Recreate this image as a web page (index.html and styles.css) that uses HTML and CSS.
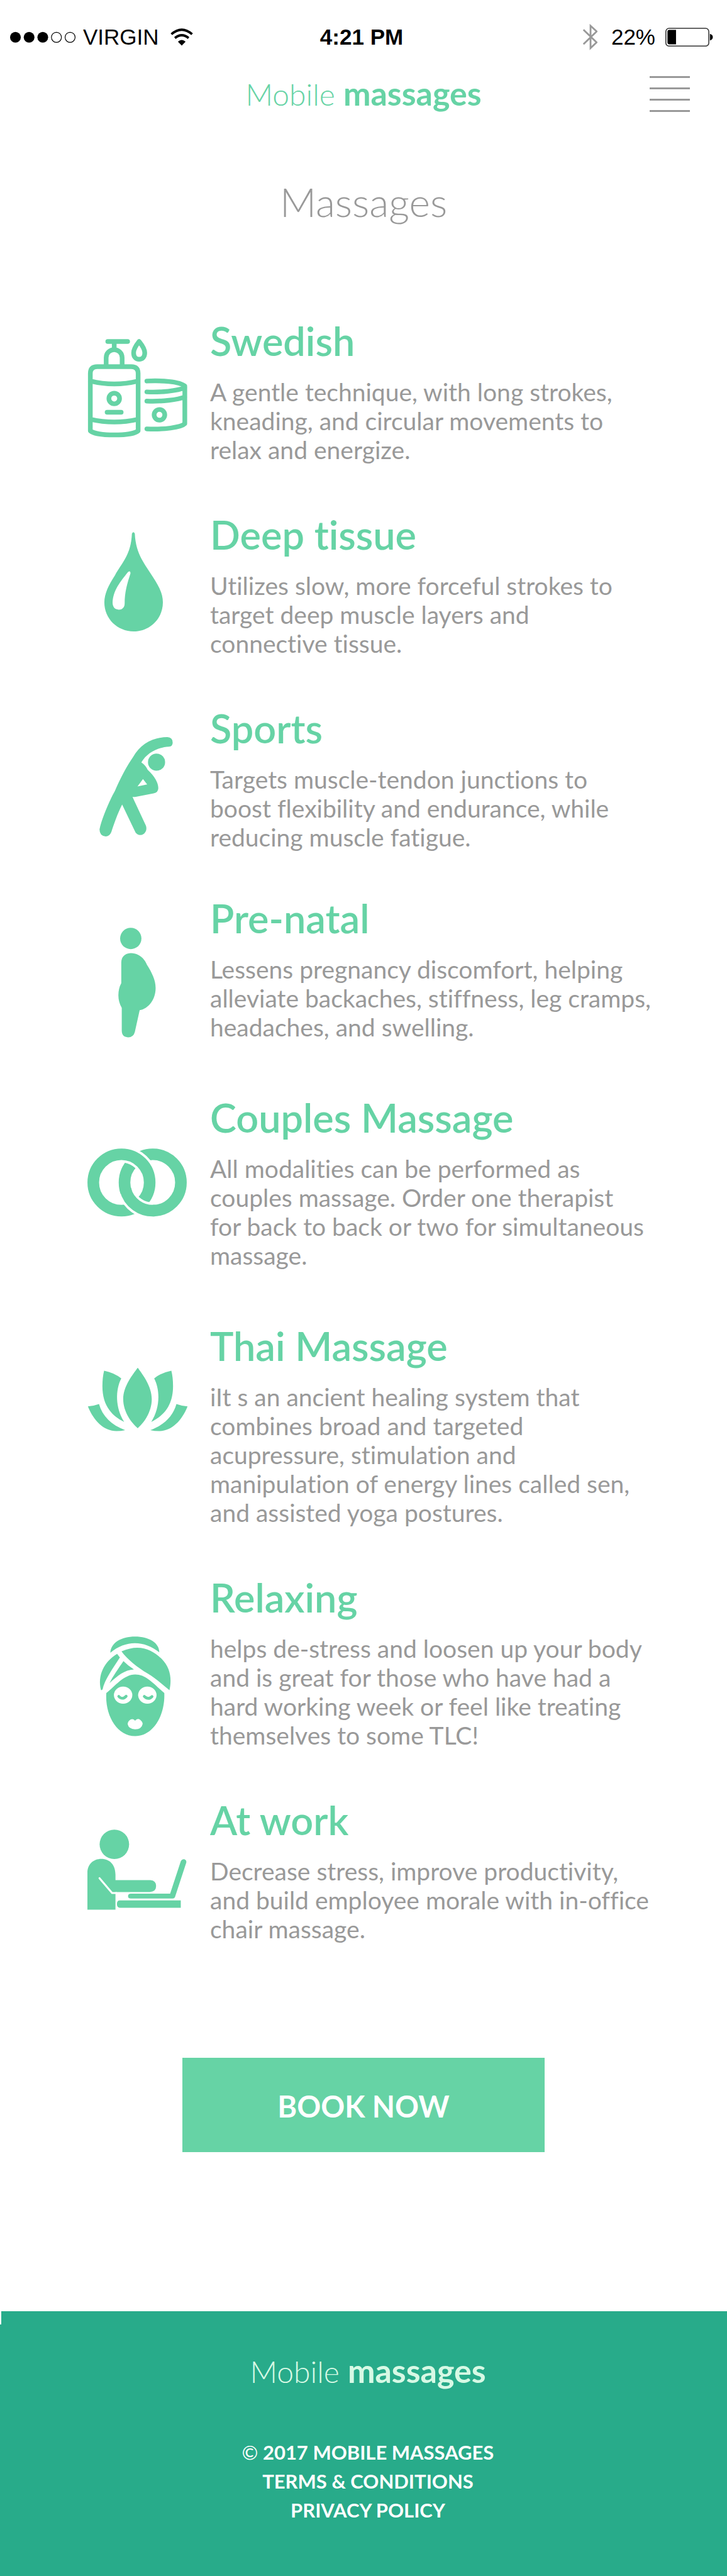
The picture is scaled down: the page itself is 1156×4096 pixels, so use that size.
FILE: index.html
```html
<!DOCTYPE html>
<html lang="en">
<head>
<meta charset="utf-8">
<meta name="viewport" content="width=device-width, initial-scale=1">
<title>Mobile massages</title>
<link rel="stylesheet" href="styles.css">
</head>
<body>
<div class="status">
  <div class="status-side">
    <svg class="signal" viewBox="0 0 134 24" aria-hidden="true">
      <circle cx="11" cy="12" r="11"/><circle cx="39" cy="12" r="11"/><circle cx="67" cy="12" r="11"/>
      <circle class="hollow" cx="95" cy="12" r="10.3"/><circle class="hollow" cx="123" cy="12" r="10.3"/>
    </svg>
    <span>VIRGIN</span>
    <svg class="wifi" viewBox="0 0 142 110" aria-hidden="true">
      <path class="wave" d="M6 37Q71 -20 136 37M28 61Q71 26 114 61"/>
      <path d="M47 84Q71 62 95 84L71 109Z"/>
    </svg>
  </div>
  <strong>4:21 PM</strong>
  <div class="status-side status-end">
    <svg class="bluetooth" viewBox="0 0 90 162" aria-hidden="true">
      <path d="M3 36L85 115L47 151V12L85 47L3 126"/>
    </svg>
    <span>22%</span>
    <svg class="battery" viewBox="0 0 296 118" aria-hidden="true">
      <rect class="shell" x="3" y="4" width="266" height="110" rx="20"/>
      <path d="M24 14H66V103H24Q13 103 13 92V25Q13 14 24 14ZM276 38Q294 44 294 58T276 80Z"/>
    </svg>
  </div>
</div>

<header class="top">
  <a class="logo" href="#">Mobile <b>massages</b></a>
  <button class="menu" type="button" aria-label="Menu"><i></i><i></i><i></i><i></i></button>
</header>

<main>
  <h1>Massages</h1>
  <ul class="services">
    <li>
      <svg class="icon outline" viewBox="30 -45 623 800" aria-hidden="true">
        <path d="M48 652V297Q48 255 90 255H302Q344 255 344 297V652C310 686 82 686 48 652ZM48 344Q196 380 344 344M48 580Q196 615 344 580M146 255V199A49.5 49.5 0 0 1 245 199V255M196 150V99M156 99H279M152 537H239"/>
        <path d="M350 99C335 118 316 142 316 169C316 195 330 209 350 209S385 195 385 169C385 142 365 118 350 99Z"/>
        <path d="M398 344C480 340 600 345 633 375V608C610 632 500 645 398 640M398 411C480 415 590 405 633 385M398 468C490 472 590 460 633 442"/>
        <circle cx="196" cy="452" r="33"/><circle cx="476" cy="553" r="33"/>
      </svg>
      <div><h2>Swedish</h2>
      <p>A gentle technique, with long strokes,<br>kneading, and circular movements to<br>relax and energize.</p></div>
    </li>
    <li>
      <svg class="icon" viewBox="180 1056 208 256" aria-hidden="true">
        <path d="M272 1101Q275 1095 278 1101C280 1145 300 1165 315 1190C328 1210 336 1225 336 1243C336 1277 309 1303 275.500 1303S215 1277 215 1243C215 1225 224 1207 237 1187C252 1160 270 1145 272 1101Z"/>
        <path class="cut" d="M264 1180Q269 1177 269 1183C262 1205 257 1222 257 1245C257 1254 251 1258 245 1258C237 1258 232 1253 232 1243C233 1218 248 1200 264 1180Z"/>
      </svg>
      <div><h2>Deep tissue</h2>
      <p>Utilizes slow, more forceful strokes to<br>target deep muscle layers and<br>connective tissue.</p></div>
    </li>
    <li class="snug">
      <svg class="icon" viewBox="30 -111 623 830" aria-hidden="true">
        <circle cx="458" cy="239" r="53"/>
        <path fill-rule="evenodd" d="M525 84Q558 86 558 118Q558 142 535 143C465 147 400 180 364 240Q390 258 403 286C445 325 469 365 469 400Q468 428 440 432L330 454Q315 456 309 454L392 632Q402 660 380 682Q350 702 328 675L245 501C215 560 195 620 178 672Q167 699 143 699Q105 695 105 655C118 590 165 480 200 418C230 345 275 260 312 208C360 125 435 85 525 84ZM374 344L400 377L340 389Z"/>
      </svg>
      <div><h2>Sports</h2>
      <p>Targets muscle-tendon junctions to<br>boost flexibility and endurance, while<br>reducing muscle fatigue.</p></div>
    </li>
    <li class="roomy">
      <svg class="icon" viewBox="180 1845 208 300" aria-hidden="true">
        <circle cx="269.600" cy="1933.700" r="22"/>
        <path d="M250 1983C250 1971 259 1964 270 1964C284 1964 297 1973 303 1988C313 2004 321 2019 321 2036C321 2060 306 2079 288 2082L278 2127Q275 2138 264 2138Q251 2138 251 2124V2077Q244 2065 244 2051Q244 2037 250 2026Z"/>
      </svg>
      <div><h2>Pre-natal</h2>
      <p>Lessens pregnancy discomfort, helping<br>alleviate backaches, stiffness, leg cramps,<br>headaches, and swelling.</p></div>
    </li>
    <li class="roomy">
      <svg class="icon rings" viewBox="180 2255 208 256" aria-hidden="true">
        <circle cx="315" cy="2436" r="58.300"/>
        <path class="gap" d="M250.400 2377.700A58.300 58.300 0 0 1 305.200 2416"/>
        <circle cx="250.400" cy="2436" r="58.300"/>
        <path class="gap" d="M315 2494.300A58.300 58.300 0 0 1 260.200 2456"/>
        <path d="M320 2494.100A58.300 58.300 0 0 1 258.500 2450"/>
      </svg>
      <div><h2>Couples Massage</h2>
      <p>All modalities can be performed as<br>couples massage. Order one therapist<br>for back to back or two for simultaneous<br>massage.</p></div>
    </li>
    <li>
      <svg class="icon" viewBox="180 2728 208 230" aria-hidden="true">
        <path d="M284 2820C294 2834 313 2858 313 2885C313 2912 296 2935 284 2945C272 2935 254 2912 254 2885C254 2858 274 2834 284 2820Z"/>
        <g id="petals"><path d="M214.500 2826Q235 2830 250 2842C238 2865 237 2902 256 2932C232 2920 211 2900 211 2858Q211 2840 214.500 2826ZM181 2900Q193 2899 204 2895C211 2920 229 2938 258 2949Q250 2951 240 2951C214 2951 193 2930 181 2900Z"/></g>
        <use href="#petals" transform="translate(568 0) scale(-1 1)"/>
      </svg>
      <div><h2>Thai Massage</h2>
      <p>iIt s an ancient healing system that<br>combines broad and targeted<br>acupressure, stimulation and<br>manipulation of energy lines called sen,<br>and assisted yoga postures.</p></div>
    </li>
    <li>
      <svg class="icon" viewBox="30 -306 623 1010" aria-hidden="true">
        <path d="M172 177C175 115 240 77 325 77C410 77 475 115 475 174C380 98 265 98 172 177Z"/>
        <path d="M241 168C350 120 430 155 490 215C545 270 553 340 538 409C495 375 455 335 400 303C345 272 275 215 241 168Z"/>
        <path d="M214 184L231 206C190 270 135 345 124 404Q118 410 114 408C92 320 130 235 214 184Z"/>
        <path d="M253 228Q280 255 318 280C260 283 215 320 167 365C185 325 225 270 253 228Z"/>
        <path d="M147 426C200 385 255 311 326 311C395 311 440 370 506 426C512 560 440 693 326 693C210 693 138 560 147 426Z"/>
        <g class="cut"><ellipse cx="251" cy="439" rx="57" ry="53"/><ellipse cx="401" cy="439" rx="57" ry="53"/>
        <path d="M325 597Q340 580 356 592Q372 605 372 618Q365 651 325 651Q285 650 279 618Q281 600 298 590Q312 583 325 597Z"/></g>
        <path class="lids" d="M224 447Q246 471 270 446M382 447Q408 471 430 448"/>
      </svg>
      <div><h2>Relaxing</h2>
      <p>helps de-stress and loosen up your body<br>and is great for those who have had a<br>hard working week or feel like treating<br>themselves to some TLC!</p></div>
    </li>
    <li class="last">
      <svg class="icon" viewBox="178 3710 208 240" aria-hidden="true">
        <circle cx="233.700" cy="3807" r="30.500"/>
        <path d="M178 3942V3866C178 3848 190 3837 207 3837C224 3837 236 3849 236 3870V3881H308Q320 3882 320 3893Q320 3905 307 3905.500H236V3942Z"/>
        <path class="seam" d="M203 3877L229 3907.500H238"/>
        <path d="M268 3909H349L371 3842Q374 3837 379 3838Q384 3840 382 3846L359 3916Q358 3919 354 3919H268Q262 3919 262 3914Q262 3909 268 3909ZM245 3923H371V3938H245Q239 3938 239 3930.500Q239 3923 245 3923Z"/>
      </svg>
      <div><h2>At work</h2>
      <p>Decrease stress, improve productivity,<br>and build employee morale with in-office<br>chair massage.</p></div>
    </li>
  </ul>
  <button class="book" type="button">BOOK NOW</button>
</main>

<footer class="bottom">
  <a class="logo" href="#">Mobile <b>massages</b></a>
  <p><span>©</span> 2017 MOBILE MASSAGES</p>
  <a href="#">TERMS &amp; CONDITIONS</a>
  <a href="#">PRIVACY POLICY</a>
</footer>
</body>
</html>
```
FILE: styles.css
```css
* { box-sizing: border-box; }

body {
  margin: 0;
  background: #fff;
  color: #999;
  font-family: Lato, "Open Sans", sans-serif;
  font-variant-ligatures: none;
}

h1, h2, p, ul { margin: 0; padding: 0; }
a { color: inherit; text-decoration: none; }
svg { display: block; flex: none; }
button { border: 0; padding: 0; font: inherit; cursor: pointer; }

/* Phone status bar */
.status {
  display: grid;
  grid-template-columns: 1fr auto 1fr;
  align-items: center;
  height: 80px;
  padding: 38px 22px 0 16px;
  color: #000;
  font: 35px/42px "Liberation Sans", Arial, sans-serif;
}
.status-side { display: flex; align-items: center; }
.status-end { justify-content: flex-end; }
.signal { width: 104px; margin-right: 12px; }
.hollow { fill: none; stroke: #000; stroke-width: 1.500; }
.wifi { width: 36px; margin-left: 18px; }
.wave { fill: none; stroke: #000; stroke-width: 15; }
.bluetooth { width: 23px; margin-right: 22px; }
.bluetooth path { fill: none; stroke: #999; stroke-width: 11; }
.battery { width: 76px; margin-left: 16px; }
.shell { fill: none; stroke: #333; stroke-width: 6; }

/* Header */
.top {
  display: grid;
  grid-template-columns: 1fr auto 1fr;
  align-items: center;
  padding: 38px 59px 0;
}
.logo {
  grid-column: 2;
  color: #66d3a5;
  font-size: 48px;
  font-weight: 300;
  line-height: 60px;
}
.logo b { font-size: 52px; font-weight: 700; }
.menu {
  display: flex;
  flex-direction: column;
  justify-self: end;
  gap: 15px;
  width: 64px;
  background: none;
}
.menu i { height: 3px; background: #999; }

h1 {
  margin-top: 101px;
  font-size: 64px;
  font-weight: 300;
  line-height: 80px;
  text-align: center;
}

/* Services */
.services {
  list-style: none;
  padding: 145px 80px 0 139px;
}
.services li {
  display: flex;
  align-items: flex-start;
  gap: 35px;
  margin-bottom: 76px;
}
.services .snug { margin-bottom: 70px; }
.services .roomy { margin-bottom: 85px; }
.services .last { margin-bottom: 182px; }
.services h2 {
  margin-bottom: 22px;
  color: #66d3a5;
  font-size: 63px;
  font-weight: 600;
  line-height: 72px;
}
.services p {
  font-size: 39px;
  font-weight: 400;
  line-height: 46px;
  white-space: nowrap;
}

/* Icons */
.icon { width: 160px; fill: #66d3a5; }
.outline {
  fill: none;
  stroke: #66d3a5;
  stroke-width: 29;
  stroke-linecap: round;
  stroke-linejoin: round;
}
.rings { fill: none; stroke: #66d3a5; stroke-width: 24; }
.gap { stroke: #fff; stroke-width: 34; }
.cut { fill: #fff; }
.lids { fill: none; stroke: #66d3a5; stroke-width: 17; stroke-linecap: round; }
.seam { fill: none; stroke: #fff; stroke-width: 4; stroke-linecap: round; }

.book {
  display: block;
  width: 576px;
  height: 150px;
  margin: 0 auto;
  padding-top: 4px;
  background: #66d3a5;
  color: #fff;
  font-size: 47px;
  font-weight: 700;
}

/* Footer */
.bottom {
  position: relative;
  display: flex;
  flex-direction: column;
  align-items: center;
  margin-top: 253px;
  padding: 64px 0 84px 14px;
  background: #28ab8a;
  color: #fff;
  font-size: 31px;
  font-weight: 700;
  line-height: 46px;
}
.bottom::before {
  content: "";
  position: absolute;
  top: 0;
  left: 0;
  width: 2px;
  height: 21px;
  background: #fff;
}
.bottom .logo { margin-bottom: 75px; color: #d7f9e5; }
.bottom span { font-weight: 400; }
```
